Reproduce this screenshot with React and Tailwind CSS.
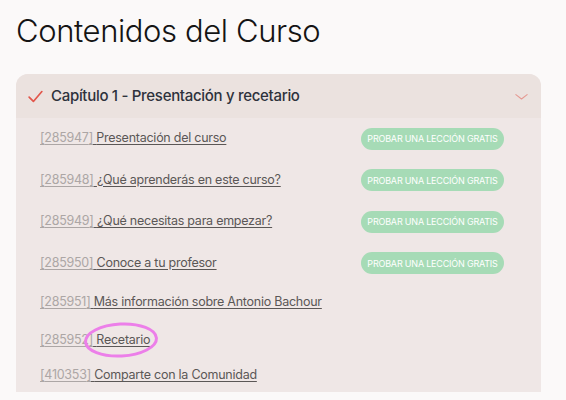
import React from 'react';

const lessons = [
  { id: '285947', title: 'Presentación del curso', free: true },
  { id: '285948', title: '¿Qué aprenderás en este curso?', free: true },
  { id: '285949', title: '¿Qué necesitas para empezar?', free: true },
  { id: '285950', title: 'Conoce a tu profesor', free: true },
  { id: '285951', title: 'Más información sobre Antonio Bachour', free: false },
  { id: '285952', title: 'Recetario', free: false, circled: true },
  { id: '410353', title: 'Comparte con la Comunidad', free: false, last: true },
];

function LessonRow({ lesson }) {
  const height = lesson.free ? 'h-[41.5px]' : lesson.last ? 'h-[33px]' : 'h-[37.5px]';
  return (
    <div className={`flex items-center justify-between pl-6 pr-[37px] ${height}`}>
      <div className="flex items-center text-[12.5px] tracking-[-0.25px]">
        <span className="text-[#aca6a5] underline decoration-[#aca6a5] underline-offset-2">[{lesson.id}]</span>
        <span className="relative text-[#5b5756] underline decoration-[#5b5756] underline-offset-2">
          {'\u00a0'}
          {lesson.title}
          {lesson.circled && (
            <svg className="pointer-events-none absolute left-[-10px] top-[-10px]" width="76" height="38" viewBox="0 0 76 38">
              <ellipse cx="38" cy="19" rx="35.5" ry="16" fill="none" stroke="#ec7fe9" strokeWidth="3" transform="rotate(-3 38 19)" />
            </svg>
          )}
        </span>
      </div>
      {lesson.free && (
        <button className="h-[22px] w-[143px] rounded-full bg-[#a6dbb6] text-[9px] font-normal uppercase tracking-[-0.2px] text-white">
          Probar una lección gratis
        </button>
      )}
    </div>
  );
}

export default function App() {
  return (
    <div className="min-h-screen w-[566px] bg-[#fbf9f9] px-4 pt-[13px] font-['Inter',sans-serif]">
      <h1 className="text-[31px] font-light leading-9 tracking-[-0.4px] text-[#141414]">Contenidos del Curso</h1>

      <div className="mt-[25px] w-[525px] overflow-hidden rounded-t-xl bg-[#efe7e6]">
        {/* Chapter header */}
        <div className="flex h-[44px] items-center justify-between bg-[#ebe2df] pl-[11px] pr-[12px]">
          <div className="flex items-center gap-[7px]">
            <svg width="17" height="17" viewBox="0 0 24 24" fill="none" stroke="#e2574c" strokeWidth="2.4" strokeLinecap="round" strokeLinejoin="round">
              <path d="M3 13l6 6L21 5" />
            </svg>
            <span className="text-[15px] font-medium tracking-[-0.3px] text-[#2e323c]">Capítulo 1 - Presentación y recetario</span>
          </div>
          <svg width="15" height="15" viewBox="0 0 24 24" fill="none" stroke="#e59a93" strokeWidth="1.8" strokeLinecap="round" strokeLinejoin="round">
            <path d="M3 9l9 7 9-7" />
          </svg>
        </div>

        {/* Lessons */}
        <div>
          {lessons.map((l) => (
            <LessonRow key={l.id} lesson={l} />
          ))}
        </div>
      </div>
    </div>
  );
}
